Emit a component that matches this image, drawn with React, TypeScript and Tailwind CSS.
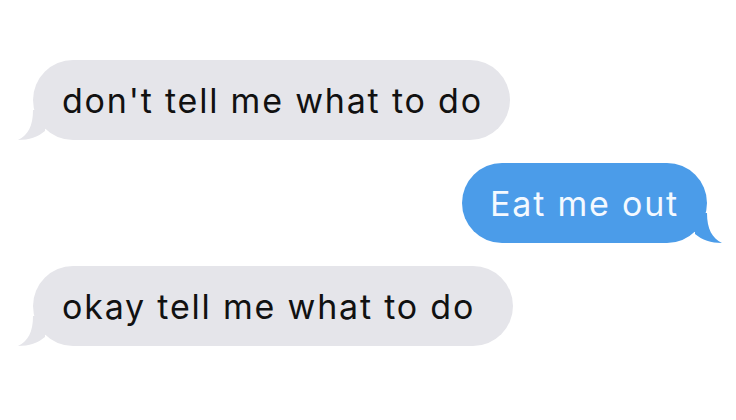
import React from 'react';

const gray = '#e5e5ea';
const blue = '#4b9ce9';

const Tail: React.FC<{ side: 'left' | 'right'; color: string }> = ({ side, color }) => (
  <svg
    viewBox="0 0 30 30"
    className={
      side === 'left'
        ? 'absolute left-[-15px] bottom-0 w-[30px] h-[30px]'
        : 'absolute right-[-15px] bottom-0 w-[30px] h-[30px] -scale-x-100'
    }
  >
    <path d="M15 0 C15 16 10 25 0 30 C11 30 20 27 27 21 L27 0 Z" fill={color} />
  </svg>
);

const messages = [
  { text: "don't tell me what to do", me: false, pad: 'pl-[29px] pr-[27px]' },
  { text: 'Eat me out', me: true, pad: 'pl-[28px] pr-[28px]' },
  { text: 'okay tell me what to do', me: false, pad: 'pl-[29px] pr-[38px]' },
];

export default function App() {
  return (
    <div
      className="w-[736px] h-[420px] bg-white flex flex-col gap-[23px] pt-[60px] px-[29px] overflow-hidden"
      style={{ fontFamily: 'Inter, "Liberation Sans", sans-serif' }}
    >
      {messages.map((m, i) => (
        <div key={i} className={m.me ? 'flex justify-end' : 'flex justify-start pl-[4px]'}>
          <div
            className={`relative h-[80px] rounded-[40px] flex items-center text-[34px] tracking-[1.8px] ${m.pad} ${
              m.me ? 'text-[#f4f9ff]' : 'text-[#111]'
            }`}
            style={{ backgroundColor: m.me ? blue : gray }}
          >
            <Tail side={m.me ? 'right' : 'left'} color={m.me ? blue : gray} />
            <span className="relative">{m.text}</span>
          </div>
        </div>
      ))}
    </div>
  );
}
